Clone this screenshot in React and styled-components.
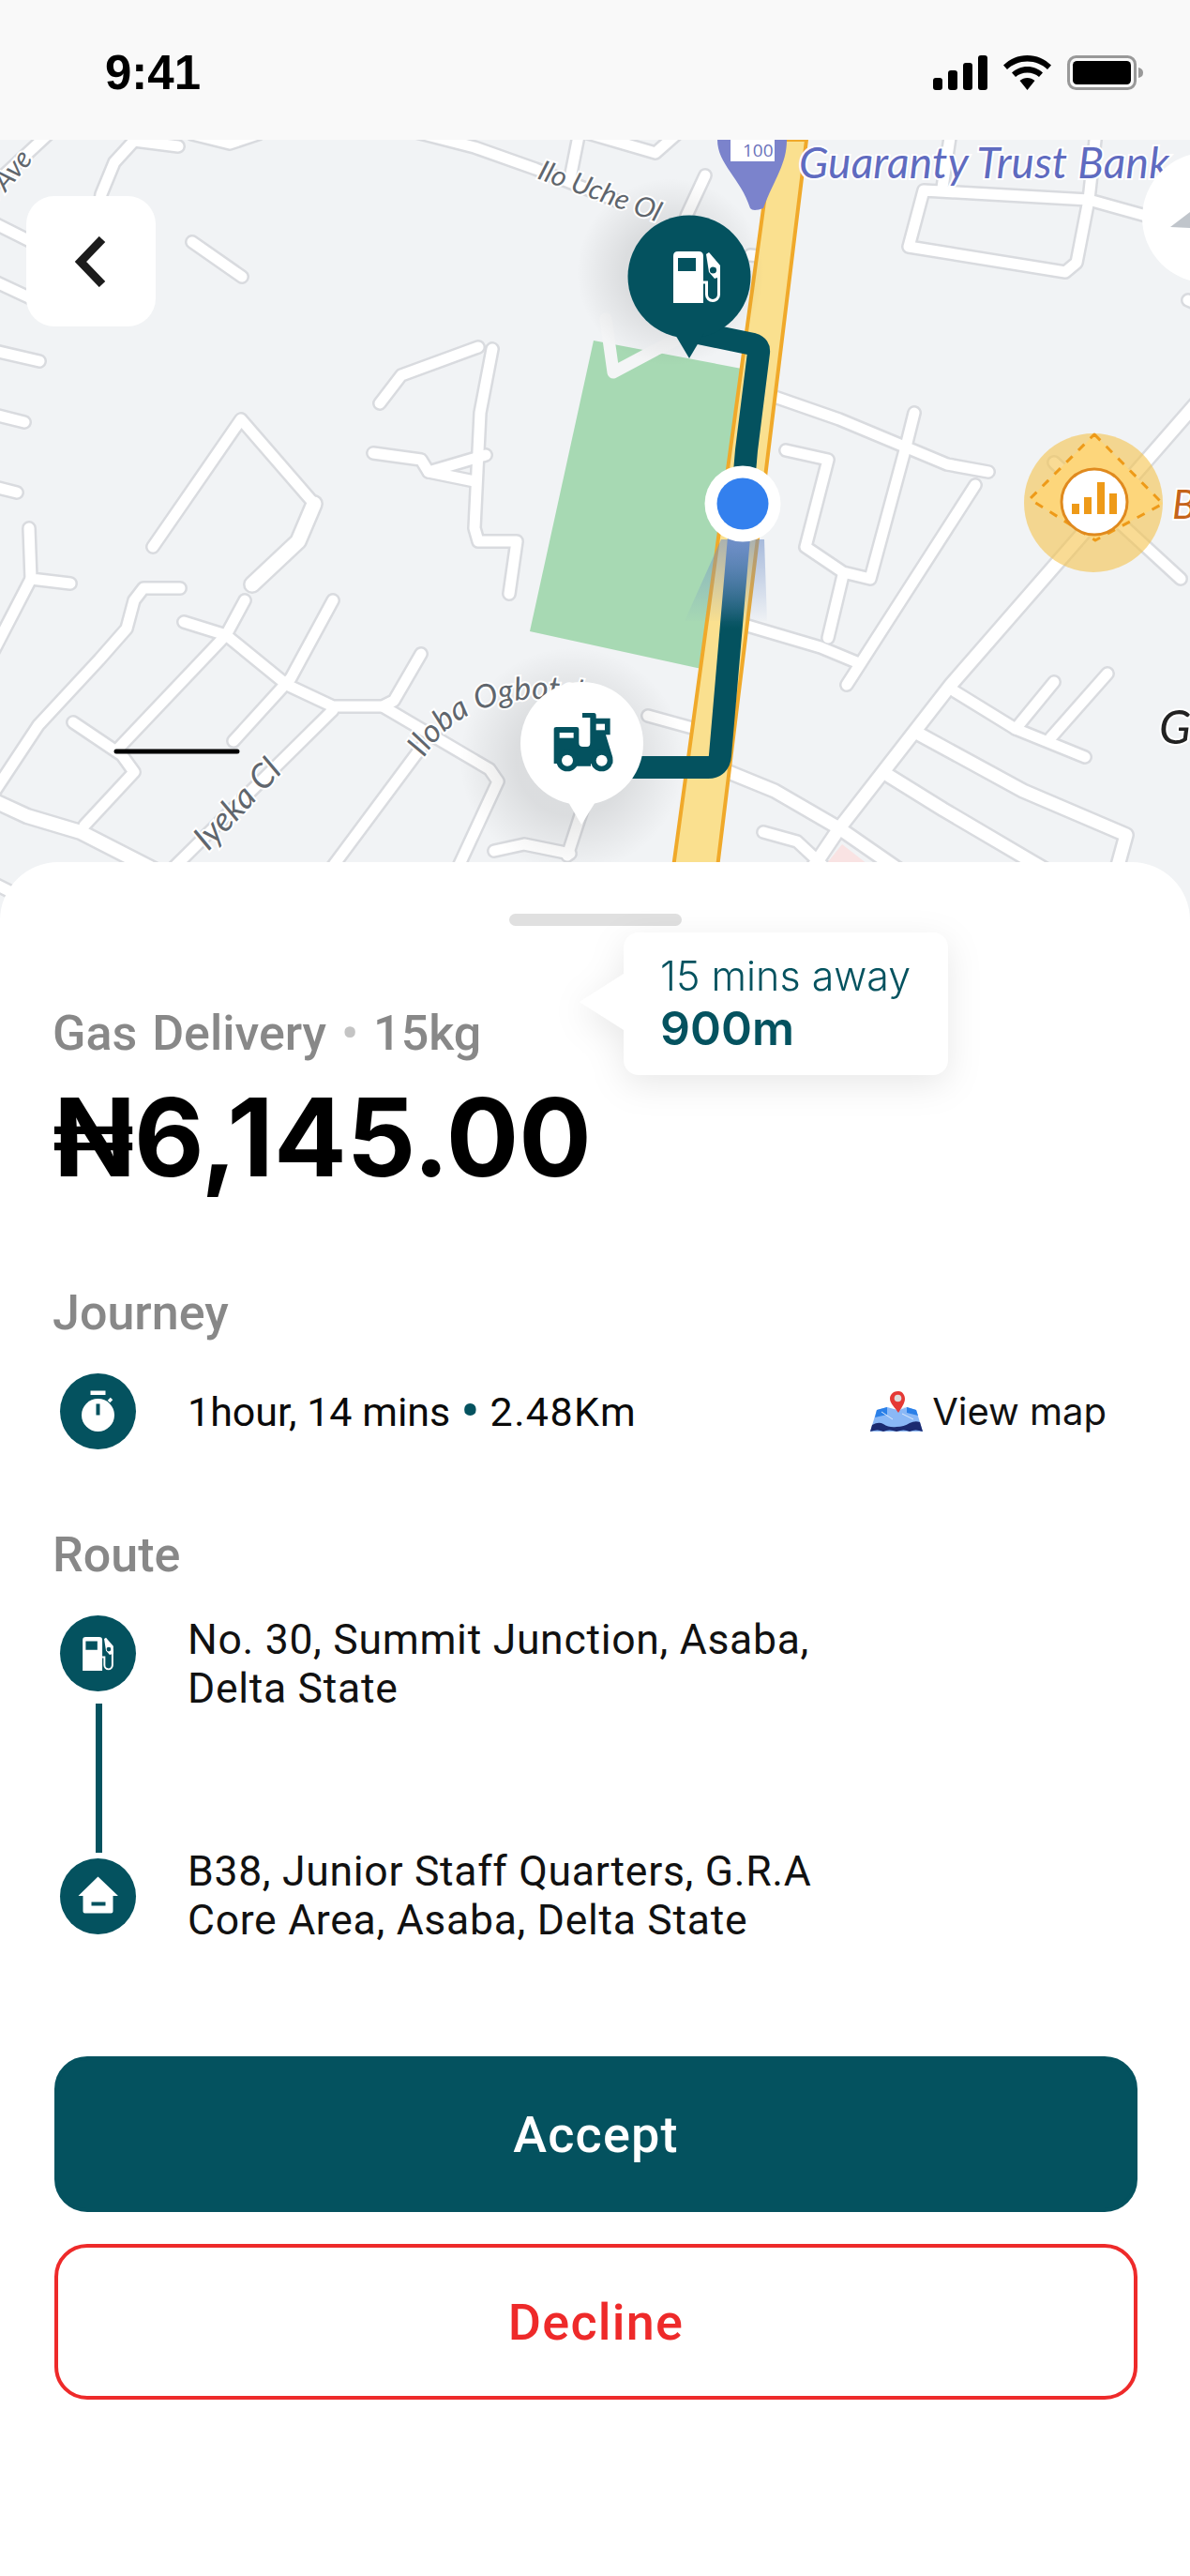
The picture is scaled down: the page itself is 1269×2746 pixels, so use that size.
import React from "react";
import styled, { createGlobalStyle } from "styled-components";

const TEAL = "#04525f";

const GlobalStyle = createGlobalStyle`
  html, body {
    margin: 0;
    background: #fff;
  }
  #root {
    width: 1269px;
    height: 2746px;
    overflow: hidden;
  }
`;

const Page = styled.div`
  width: 1269px;
  height: 2746px;
  background: #fff;
  display: flex;
  flex-direction: column;
  font-family: Roboto, "Liberation Sans", sans-serif;
`;

const StatusBar = styled.div`
  height: 149px;
  box-sizing: border-box;
  flex: none;
  padding: 5px 50px 0 112px;
  background: #f9f9f9;
  display: flex;
  align-items: center;
  justify-content: space-between;
  position: relative;
  z-index: 1;
`;

const Clock = styled.span`
  font-family: "Liberation Sans", Arial, sans-serif;
  font-weight: 700;
  font-size: 51px;
  color: #000;
`;

const StatusIcons = styled.div`
  display: flex;
  align-items: center;
  gap: 17px;
`;

const MapPanel = styled.div`
  height: 851px;
  flex: none;
  position: relative;
  overflow: hidden;
  background: #f1f3f5;
`;

const MapCanvas = styled.svg`
  display: block;
  width: 1269px;
  height: 851px;
`;

const BackButton = styled.button`
  position: absolute;
  left: 28px;
  top: 60px;
  width: 138px;
  height: 139px;
  border: 0;
  padding: 0;
  border-radius: 30px;
  background: #fff;
  display: flex;
  align-items: center;
  justify-content: center;
`;

const Sheet = styled.section`
  position: relative;
  margin-top: -81px;
  flex: 1;
  background: #fff;
  border-radius: 62px 62px 0 0;
  padding: 55px 56px 0;
`;

const Handle = styled.div`
  width: 184px;
  height: 13px;
  margin: 0 auto;
  border-radius: 7px;
  background: #e0e0e0;
`;

const Tooltip = styled.div`
  position: absolute;
  left: 665px;
  top: 75px;
  width: 346px;
  height: 152px;
  box-sizing: border-box;
  padding: 20px 0 0 39px;
  background: #fff;
  border-radius: 16px;
  filter: drop-shadow(0 10px 18px rgba(0, 0, 0, 0.09));
  color: ${TEAL};

  &::before {
    content: "";
    position: absolute;
    left: -47px;
    top: 44px;
    border-style: solid;
    border-width: 30px 47px 30px 0;
    border-color: transparent #fff transparent transparent;
  }
`;

const TooltipTime = styled.div`
  font-family: Inter, sans-serif;
  font-weight: 300;
  font-size: 43px;
  line-height: 52px;
`;

const TooltipDistance = styled.div`
  font-family: Inter, sans-serif;
  font-weight: 600;
  font-size: 50px;
  line-height: 60px;
`;

const Label = styled.div`
  font-weight: 500;
  font-size: 52px;
  line-height: 60px;
  word-spacing: 3px;
  color: #888;
  margin-top: ${(p) => p.$top}px;
`;

const LabelDot = styled.span`
  color: #c4c4c4;
`;

const Price = styled.div`
  font-family: Inter, "Liberation Sans", sans-serif;
  font-weight: 700;
  font-size: 115px;
  line-height: 130px;
  margin-top: 16px;
  color: #000;
`;

const JourneyRow = styled.div`
  display: flex;
  align-items: center;
  justify-content: space-between;
  margin-top: 34px;
  padding-left: 8px;
`;

const JourneyInfo = styled.div`
  display: flex;
  align-items: center;
  gap: 55px;
  font-size: 43px;
  color: #0a0a0a;
`;

const TealDot = styled.span`
  color: ${TEAL};
  font-size: 62px;
  line-height: 0;
  vertical-align: -5px;
`;

const Distance = styled.span`
  letter-spacing: 1.4px;
`;

const ViewMap = styled.a`
  display: flex;
  align-items: center;
  gap: 10px;
  margin-right: 33px;
  font-family: Inter, sans-serif;
  font-size: 40px;
  color: #111;
`;

const IconCircle = styled.div`
  flex: none;
  width: 81px;
  height: 81px;
  border-radius: 50%;
  background: ${TEAL};
  display: flex;
  align-items: center;
  justify-content: center;
`;

const RouteList = styled.div`
  margin-top: 34px;
  padding-left: 8px;
`;

const RouteStop = styled.div`
  display: flex;
  align-items: flex-start;
  gap: 55px;
  height: ${(p) => p.$height}px;
`;

const Address = styled.div`
  font-size: 44.5px;
  line-height: 52px;
  letter-spacing: 0.7px;
  color: #111;
  margin-top: ${(p) => p.$shift}px;
`;

const Connector = styled.div`
  width: 7px;
  height: 159px;
  margin: 13px 0 6px 38px;
  background: ${TEAL};
`;

const Actions = styled.div`
  display: flex;
  flex-direction: column;
  gap: 34px;
  margin: 119px 0 0 2px;
`;

const ActionButton = styled.button`
  height: 166px;
  box-sizing: border-box;
  border-radius: 35px;
  border: 4px solid ${(p) => (p.$outline ? "#ee2a2a" : TEAL)};
  background: ${(p) => (p.$outline ? "#fff" : TEAL)};
  color: ${(p) => (p.$outline ? "#ee2a2a" : "#fff")};
  font-family: Roboto, sans-serif;
  font-weight: 500;
  font-size: 54px;
  letter-spacing: 1.2px;
  padding: 0;
`;

const roads = [
  { d: "M60 135 L-10 200" },
  { d: "M190 156 L143 150 L122 173 L108 207 L100 260" },
  { d: "M-10 236 L50 266" },
  { d: "M-10 298 L50 326" },
  { d: "M205 258 L258 295" },
  { d: "M-10 373 L42 385" },
  { d: "M-10 441 L26 450" },
  { d: "M405 430 L428 400 L510 370" },
  { d: "M525 372 L512 440 L506 563 L510 577 L551 577 L543 633" },
  { d: "M398 483 L449 490 L457 503 L506 513" },
  { d: "M457 503 L518 485" },
  { d: "M440 140 L506 157 L571 180 L660 215" },
  { d: "M618 140 L608 190" },
  { d: "M205 143 L245 153 L275 143" },
  { d: "M163 583 L257 447 L335 537 L318 577" },
  { d: "M335 537 L318 577 L269 623", w: 15 },
  { d: "M-10 518 L18 525" },
  { d: "M31 563 L33 617 L75 622" },
  { d: "M33 617 L-10 700" },
  { d: "M192 627 L153 627 L143 640 L135 670 L106 703 L41 773 L-10 850" },
  { d: "M261 640 L241 677 L127 797" },
  { d: "M78 770 L130 805 L143 823 L90 880" },
  { d: "M196 663 L241 677 L306 730 L355 753 L408 753 L420 747 L449 697" },
  { d: "M355 640 L310 723 L249 790" },
  { d: "M408 753 L522 820 L531 833 L486 930" },
  { d: "M355 757 L180 930" },
  { d: "M449 797 L350 930" },
  { d: "M-10 852 L29 870 L86 887 L170 930", w: 14 },
  { d: "M-10 940 L30 960" },
  { d: "M527 907 L559 900 L608 910" },
  { d: "M622 860 L605 912" },
  { d: "M620 140 L699 163 L725 140" },
  { d: "M752 187 L732 230" },
  { d: "M985 203 L1161 213 L1148 280 L1136 290 L969 263 Z" },
  { d: "M1161 213 L1222 230" },
  { d: "M1014 140 L1005 200" },
  { d: "M1169 140 L1161 213" },
  { d: "M800 272 L830 275" },
  { d: "M826 423 L895 447 L1010 495 L1054 503" },
  { d: "M838 480 L883 490 L859 583 L899 610 L928 617 L965 480 L975 440" },
  { d: "M899 613 L883 680" },
  { d: "M1040 517 L903 730" },
  { d: "M797 667 L875 690 L916 707" },
  { d: "M1280 425 L1014 730 L895 883 L860 935", w: 13 },
  { d: "M1124 493 L1259 617" },
  { d: "M1018 737 L1083 777 L1157 807" },
  { d: "M1083 777 L1124 727" },
  { d: "M1120 787 L1181 718" },
  { d: "M981 783 L1091 843 L1201 890 L1190 930", w: 13 },
  { d: "M948 827 L1006 863 L1091 913 L1120 930", w: 13 },
  { d: "M777 823 L826 843 L895 883 L970 935", w: 13 },
  { d: "M814 887 L850 897 L880 925" },
  { d: "M691 763 L742 777" },
  { d: "M1267 320 L1290 330" },
];

const GoogleLabel = styled.text`
  font-family: Lato, sans-serif;
  font-style: italic;
  font-size: ${(p) => p.$size}px;
  fill: ${(p) => p.$color};
  stroke: #fff;
  stroke-width: 4px;
  paint-order: stroke;
`;

const ShieldNumber = styled.text`
  font-family: "Open Sans", sans-serif;
  font-size: 19px;
  fill: #6b73bb;
`;

const PumpIcon = ({ width, height, color }) => (
  <svg width={width} height={height} viewBox="0 0 50 55">
    <path
      fillRule="evenodd"
      fill="#fff"
      d="M0 5 Q0 0 5 0 H27 Q32 0 32 5 V55 H0 Z M5 7 V21 H24 V7 Z"
    />
    <path
      fill="none"
      stroke="#fff"
      strokeWidth="3"
      d="M48.5 20 V46 a6.5 6.5 0 0 1 -13 0 V33 H32"
    />
    <path fill="#fff" d="M35 3 L38 1 L50 15 V27 L44 29 L38 22 Z" />
    <circle cx="42.5" cy="20" r="3.6" fill={color} />
  </svg>
);

const SignalIcon = () => (
  <svg width="58" height="37" viewBox="0 0 58 37">
    <rect x="0" y="24" width="10" height="13" rx="3" />
    <rect x="16" y="16" width="10" height="21" rx="3" />
    <rect x="32" y="8" width="10" height="29" rx="3" />
    <rect x="48" y="0" width="10" height="37" rx="3" />
  </svg>
);

const WifiIcon = () => (
  <svg width="51" height="37" viewBox="0 0 51 37">
    <path d="M25.5 0 C15.5 0 7 4 0 10.5 L4 15 C10 9.5 17 6.5 25.5 6.5 C34 6.5 41 9.5 47 15 L51 10.5 C44 4 35.5 0 25.5 0 Z" />
    <path d="M25.5 12 C19 12 13.5 14.5 9 18.5 L13 23 C16.5 20 20.5 18.5 25.5 18.5 C30.5 18.5 34.5 20 38 23 L42 18.5 C37.5 14.5 32 12 25.5 12 Z" />
    <path d="M25.5 24 C22.5 24 20 25 17.5 27 L25.5 37 L33.5 27 C31 25 28.5 24 25.5 24 Z" />
  </svg>
);

const BatteryIcon = () => (
  <svg width="81" height="37" viewBox="0 0 81 37">
    <rect x="1.5" y="1.5" width="71" height="34" rx="8" fill="none" stroke="#999" strokeWidth="3" />
    <rect x="6" y="6" width="62" height="25" rx="4.5" fill="#000" />
    <path d="M76 13 Q81 14 81 18.5 Q81 23 76 24 Z" fill="#999" />
  </svg>
);

const StopwatchIcon = () => (
  <svg width="81" height="81" viewBox="0 0 81 81">
    <circle cx="40.5" cy="44.5" r="17.5" fill="#fff" />
    <rect x="32.5" y="18.5" width="16" height="4.5" fill="#fff" />
    <path d="M52 30 L55 27" stroke="#fff" strokeWidth="3.5" />
    <rect x="38.5" y="32.5" width="4" height="12" fill={TEAL} />
  </svg>
);

const HouseIcon = () => (
  <svg width="81" height="81" viewBox="0 0 81 81">
    <path
      fillRule="evenodd"
      fill="#fff"
      d="M40.5 19.5 L62 40 H56.5 V56.5 Q56.5 58.5 54.5 58.5 H26.5 Q24.5 58.5 24.5 56.5 V40 H19.5 Z M33.5 46.5 V50.5 H48.5 V46.5 Z"
    />
  </svg>
);

const MapPinIcon = () => (
  <svg width="56" height="43" viewBox="0 0 56 43">
    <path fill="#8ab8f6" d="M7 20 L18 17 L29 20 L39 17 L49 20 L56 43 H0 Z" />
    <path fill="#2b80e8" d="M7 20 L18 17 L18 25 L5 28 Z M39 17 L49 20 L51 26 L39 23 Z" />
    <path
      fill="#1b2a70"
      d="M2 36 Q9 32 14 35 Q20 39 28 38 Q36 38 42 34 Q48 31 53 33 L56 43 Q48 40 42 43 Q36 40 28 43 Q20 40 14 43 Q8 40 0 43 Z"
    />
    <path d="M30 20 L38 17 M12 22 L24 30 M34 24 L46 30" stroke="#dbe8fb" strokeWidth="1" fill="none" />
    <path fill="#e53935" d="M30 0 C23 0 21 5 21 8 C21 13 27 18 30 23 C33 18 37 13 37 8 C37 5 35 0 30 0 Z" />
    <circle cx="29.5" cy="7.5" r="3.8" fill="#dcdcdc" />
  </svg>
);

const MapDrawing = () => (
  <MapCanvas viewBox="0 149 1269 851">
    <defs>
      <linearGradient id="routeFade" gradientUnits="userSpaceOnUse" x1="0" y1="480" x2="0" y2="670">
        <stop offset="0.49" stopColor={TEAL} />
        <stop offset="0.5" stopColor="#6f8fc8" />
        <stop offset="1" stopColor={TEAL} />
      </linearGradient>
      <linearGradient id="beam" gradientUnits="userSpaceOnUse" x1="0" y1="570" x2="0" y2="665">
        <stop offset="0" stopColor="#6f8fc8" stopOpacity="0.6" />
        <stop offset="1" stopColor="#6f8fc8" stopOpacity="0" />
      </linearGradient>
      <radialGradient id="markerShade">
        <stop offset="0.5" stopColor="#000" stopOpacity="0.09" />
        <stop offset="1" stopColor="#000" stopOpacity="0" />
      </radialGradient>
    </defs>

    <rect x="0" y="149" width="1269" height="851" fill="#f1f3f5" />

    <g fill="none" strokeLinecap="round" strokeLinejoin="round">
      {roads.map((r) => (
        <path key={r.d + "c"} d={r.d} stroke="#d9dbdf" strokeWidth={(r.w || 11) + 5} />
      ))}
      {roads.map((r) => (
        <path key={r.d} d={r.d} stroke="#fff" strokeWidth={r.w || 11} />
      ))}
    </g>

    <polygon points="633,363 791,393 748,713 565,673" fill="#a7d9b3" />
    <path d="M646 340 L654 397 L699 373 L720 363" fill="none" stroke="#f4f5f6" strokeWidth="13" strokeLinecap="round" strokeLinejoin="round" />

    <polygon points="824,149 860,149 765,925 718,925" fill="#fae08f" stroke="#f0a92a" strokeWidth="4" />
    <polygon points="898,900 878,925 930,925" fill="#f9e3e3" />

    <circle cx="715" cy="290" r="100" fill="url(#markerShade)" />
    <circle cx="610" cy="810" r="120" fill="url(#markerShade)" />

    <path d="M765 149 H839 C839 175 826 190 814 222 Q803 226 800 222 C790 190 765 175 765 149 Z" fill="#7b83cc" />
    <rect x="779" y="149" width="47" height="23" fill="#fff" />
    <ShieldNumber x="792" y="167">100</ShieldNumber>

    <GoogleLabel x="852" y="190" $size={46} $color="#5f6bc0" textLength="395" lengthAdjust="spacing">
      Guaranty Trust Bank
    </GoogleLabel>
    <GoogleLabel x="0" y="0" $size={30} $color="#60666d" transform="translate(572 190) rotate(20)">
      Ilo Uche Ol
    </GoogleLabel>
    <GoogleLabel x="0" y="0" $size={30} $color="#60666d" transform="translate(-8 222) rotate(-50)">
      o Ave
    </GoogleLabel>
    <GoogleLabel x="0" y="0" $size={36} $color="#60666d" transform="translate(222 908) rotate(-47)">
      Iyeka Cl
    </GoogleLabel>
    <path id="ogboPath" d="M452 808 Q490 745 580 745 Q640 745 700 782" fill="none" />
    <GoogleLabel $size={34} $color="#60666d">
      <textPath href="#ogboPath">Iloba Ogbote's</textPath>
    </GoogleLabel>
    <GoogleLabel x="1236" y="793" $size={50} $color="#222">
      Go
    </GoogleLabel>
    <GoogleLabel x="1250" y="553" $size={42} $color="#c5641a">
      B
    </GoogleLabel>

    <circle cx="1166" cy="536" r="74" fill="#f5c34d" fillOpacity="0.6" />
    <polygon points="1167,463 1240,537 1168,576 1098,532" fill="#fdd67b" stroke="#ee9a18" strokeWidth="3" strokeDasharray="9 9" strokeLinejoin="round" />
    <circle cx="1167" cy="535" r="35" fill="#fff" stroke="#e08a1e" strokeWidth="3" />
    <g fill="#ee9a18">
      <rect x="1143" y="537" width="8" height="11" />
      <rect x="1156" y="530" width="8" height="18" />
      <rect x="1170" y="514" width="8" height="34" />
      <rect x="1183" y="526" width="8" height="22" />
    </g>

    <path
      d="M740 354 L803 367 Q810 369 809 376 L796 480 L768 805 Q767 818 755 818 L660 818"
      fill="none"
      stroke="url(#routeFade)"
      strokeWidth="24"
    />
    <polygon points="769,575 815,575 818,662 730,662" fill="url(#beam)" />

    <circle cx="792" cy="537" r="40.5" fill="#fff" />
    <circle cx="792" cy="537" r="27.5" fill="#3380ee" />

    <circle cx="735" cy="295" r="65.5" fill={TEAL} />
    <polygon points="719,355 751,355 735,382" fill={TEAL} />
    <g transform="translate(718 268)">
      <PumpIcon width={50} height={55} color={TEAL} />
    </g>

    <circle cx="620.5" cy="792.5" r="65.5" fill="#fff" />
    <polygon points="603,850 638,850 620,879" fill="#fff" />
    <g transform="translate(540 720) scale(0.3333)" fill={TEAL}>
      <path d="M160 165 H225 Q232 165 232 172 V215 Q232 228 245 228 H258 Q268 228 268 215 V135 H243 V120 H280 Q287 120 287 128 V137 H332 V190 H318 L340 262 V282 H270 V290 H210 V282 H152 V172 Q152 165 160 165 Z" />
      <circle cx="195" cy="272" r="35" />
      <circle cx="305" cy="272" r="35" />
      <circle cx="195" cy="272" r="18" fill="#fff" />
      <circle cx="305" cy="272" r="18" fill="#fff" />
      <rect x="170" y="183" width="45" height="17" fill="#fff" />
      <rect x="287" y="155" width="28" height="20" fill="#fff" />
    </g>

    <circle cx="1287.5" cy="232" r="69.5" fill="#fff" />
    <polygon points="1248,242 1269,226 1269,243" fill="#c0c5cb" />

    <line x1="124" y1="801" x2="253" y2="801" stroke="#000" strokeWidth="5" strokeLinecap="round" />
  </MapCanvas>
);

const App = () => (
  <Page>
    <GlobalStyle />
    <StatusBar>
      <Clock>9:41</Clock>
      <StatusIcons>
        <SignalIcon />
        <WifiIcon />
        <BatteryIcon />
      </StatusIcons>
    </StatusBar>
    <MapPanel>
      <MapDrawing />
      <BackButton aria-label="Back">
        <svg width="36" height="54" viewBox="0 0 36 54">
          <path d="M30 3 L7 27 L30 51" fill="none" stroke="#1c1c1c" strokeWidth="9" />
        </svg>
      </BackButton>
    </MapPanel>
    <Sheet>
      <Handle />
      <Tooltip>
        <TooltipTime>15 mins away</TooltipTime>
        <TooltipDistance>900m</TooltipDistance>
      </Tooltip>
      <Label $top={85}>
        Gas Delivery <LabelDot>•</LabelDot> 15kg
      </Label>
      <Price>₦6,145.00</Price>
      <Label $top={92}>Journey</Label>
      <JourneyRow>
        <JourneyInfo>
          <IconCircle>
            <StopwatchIcon />
          </IconCircle>
          <span>
            1hour, 14 mins <TealDot>•</TealDot> <Distance>2.48Km</Distance>
          </span>
        </JourneyInfo>
        <ViewMap>
          <MapPinIcon />
          View map
        </ViewMap>
      </JourneyRow>
      <Label $top={83}>Route</Label>
      <RouteList>
        <RouteStop $height={81}>
          <IconCircle>
            <PumpIcon width={33} height={36} color={TEAL} />
          </IconCircle>
          <Address $shift={0}>
            No. 30, Summit Junction, Asaba,
            <br />
            Delta State
          </Address>
        </RouteStop>
        <Connector />
        <RouteStop $height={92}>
          <IconCircle>
            <HouseIcon />
          </IconCircle>
          <Address $shift={-12}>
            B38, Junior Staff Quarters, G.R.A
            <br />
            Core Area, Asaba, Delta State
          </Address>
        </RouteStop>
      </RouteList>
      <Actions>
        <ActionButton>Accept</ActionButton>
        <ActionButton $outline>Decline</ActionButton>
      </Actions>
    </Sheet>
  </Page>
);

export default App;
